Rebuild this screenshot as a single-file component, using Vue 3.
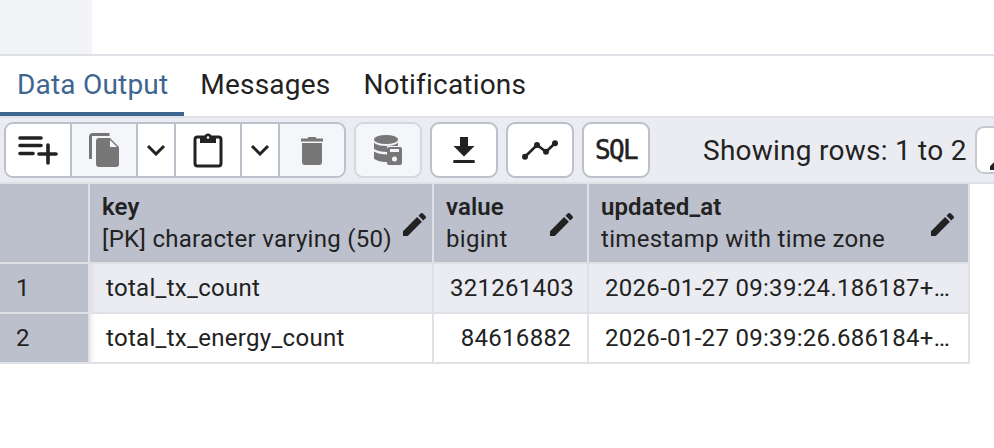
<script setup>
const tabs = [
  { label: 'Data Output', active: true },
  { label: 'Messages', active: false },
  { label: 'Notifications', active: false },
]
const rows = [
  { n: 1, key: 'total_tx_count', value: '321261403', at: '2026-01-27 09:39:24.186187+…', odd: true },
  { n: 2, key: 'total_tx_energy_count', value: '84616882', at: '2026-01-27 09:39:26.686184+…', odd: false },
]
const cols = [
  { name: 'key', type: '[PK] character varying (50)', tight: true },
  { name: 'value', type: 'bigint', tight: false },
  { name: 'updated_at', type: 'timestamp with time zone', tight: false },
]
</script>

<template>
  <div class="page">
    <div class="top"><div class="top-left"></div></div>
    <div class="tabs">
      <div v-for="t in tabs" :key="t.label" class="tab" :class="{ active: t.active }">{{ t.label }}</div>
    </div>
    <div class="toolbar">
      <div class="group">
        <div class="btn w66">
          <svg width="40" height="30" viewBox="0 0 40 30"><g fill="none" stroke="#222" stroke-width="3.600" stroke-linecap="round"><path d="M2 3H23M2 10.500H23M2 18.500H15M30 10V28M21 19H38"/></g></svg>
        </div>
        <div class="btn off w66">
          <svg width="30" height="34" viewBox="0 0 30 34"><path d="M1.500 26V3.500a2 2 0 0 1 2-2h17" fill="none" stroke="#777" stroke-width="3"/><path d="M10 5h11l9 9v17a3 3 0 0 1-3 3H10a3 3 0 0 1-3-3V8a3 3 0 0 1 3-3z" fill="#777"/><path d="M21 7v7h7z" fill="#f5f6f9"/></svg>
        </div>
        <div class="btn w38"><svg width="20" height="12" viewBox="0 0 20 12"><path d="M2 2l8 8 8-8" fill="none" stroke="#222" stroke-width="3"/></svg></div>
        <div class="btn w66">
          <svg width="30" height="36" viewBox="0 0 30 36"><rect x="2" y="5" width="26" height="29" rx="2.500" fill="none" stroke="#222" stroke-width="3"/><path d="M7 11V5h4.500a3.500 3.500 0 0 1 7 0H23v6z" fill="#222"/><circle cx="15" cy="5.500" r="1.300" fill="#fff"/></svg>
        </div>
        <div class="btn w38"><svg width="20" height="12" viewBox="0 0 20 12"><path d="M2 2l8 8 8-8" fill="none" stroke="#222" stroke-width="3"/></svg></div>
        <div class="btn off grow">
          <svg width="22" height="29" viewBox="0 0 22 29"><path d="M0 2.500h6.500L7.500 1h7l1 1.500H22V5.500H0z" fill="#777"/><path d="M1 7h20v19a3 3 0 0 1-3 3H4a3 3 0 0 1-3-3z" fill="#777"/></svg>
        </div>
      </div>
      <div class="solo off">
        <svg width="28" height="30" viewBox="0 0 28 30"><g fill="#777"><ellipse cx="12" cy="4.500" rx="12" ry="4.500"/><path d="M0 7.500c3 4.500 21 4.500 24 0V11H13v6C8 17 3 16 0 14zM0 16.500c3 2 8 3 13 3V27c-6 0-11-1.500-13-3.500z"/></g><rect x="13" y="12" width="15" height="18" rx="2" fill="#777"/><rect x="16" y="14" width="9" height="3" fill="#f5f6f9"/><circle cx="20.500" cy="24" r="2.500" fill="#f5f6f9"/></svg>
      </div>
      <div class="solo">
        <svg width="22" height="26" viewBox="0 0 22 26"><path d="M7 0h8v9h6.500L11 19.500.5 9H7z" fill="#222"/><rect x="0" y="23" width="22" height="3" rx="1.500" fill="#222"/></svg>
      </div>
      <div class="solo">
        <svg width="36" height="20" viewBox="0 0 36 20"><path d="M3 16.700L15 5l9 6.700L33 3.300" fill="none" stroke="#222" stroke-width="2.600"/><circle cx="3" cy="16.700" r="3" fill="#222"/><circle cx="15" cy="5" r="3" fill="#222"/><circle cx="24" cy="11.700" r="3" fill="#222"/><circle cx="33" cy="3.300" r="3" fill="#222"/></svg>
      </div>
      <div class="solo sql">SQL</div>
      <div class="status">Showing rows: 1 to 2</div>
      <div class="edge"><svg width="18" height="18" viewBox="3 3 18 18"><path d="M3 17.250V21h3.750L17.810 9.940l-3.750-3.750L3 17.250z" fill="#222"/></svg></div>
    </div>
    <div class="grid">
      <div class="corner"></div>
      <div v-for="c in cols" :key="c.name" class="head" :class="{ tight: c.tight }">
        <div class="head-text">
          <div class="name">{{ c.name }}</div>
          <div class="type">{{ c.type }}</div>
        </div>
        <svg class="pencil" width="23" height="23" viewBox="3 3 18 18"><path d="M3 17.250V21h3.750L17.810 9.940l-3.750-3.750L3 17.250zM20.710 7.040c.39-.39.39-1.020 0-1.410l-2.340-2.340a.996.996 0 0 0-1.410 0l-1.830 1.830 3.750 3.750 1.830-1.830z" fill="#222"/></svg>
      </div>
      <template v-for="r in rows" :key="r.n">
        <div class="rownum">{{ r.n }}</div>
        <div class="cell key" :class="{ odd: r.odd }">{{ r.key }}</div>
        <div class="cell num" :class="{ odd: r.odd, second: !r.odd }">{{ r.value }}</div>
        <div class="cell at" :class="{ odd: r.odd }">{{ r.at }}</div>
      </template>
    </div>
  </div>
</template>

<style>
html, body { margin: 0; background: #fff; }
</style>

<style scoped>
.page {
  width: 994px;
  height: 448px;
  overflow: hidden;
  background: #fff;
  font-family: Roboto, "Liberation Sans", sans-serif;
  color: #222;
}
.top { height: 54px; border-bottom: 2px solid #dfe1e7; }
.top-left { width: 92px; height: 54px; background: #f3f4f8; }
.tabs { display: flex; height: 60px; }
.tab {
  padding: 0 17px 0 16px;
  font-size: 28px;
  letter-spacing: 0.2px;
  line-height: 58px;
  height: 60px;
  box-sizing: border-box;
  white-space: nowrap;
}
.tab.active {
  padding: 0 16px 0 17px;
  color: #3e6590;
  border-bottom: 4px solid #3e6590;
}
.toolbar {
  display: flex;
  align-items: center;
  height: 68px;
  box-sizing: border-box;
  padding: 0 0 0 4px;
  background: #eaecf2;
  border-top: 2px solid #dfe1e7;
  border-bottom: 2px solid #dfe1e7;
  overflow: hidden;
}
.group {
  display: flex;
  width: 342px;
  height: 56px;
  box-sizing: border-box;
  border: 2px solid #bcc0cb;
  border-radius: 9px;
  overflow: hidden;
  flex: none;
}
.btn {
  display: flex;
  align-items: center;
  justify-content: center;
  box-sizing: border-box;
  background: #fff;
  border-right: 2px solid #bcc0cb;
  flex: none;
}
.btn.off { background: #f5f6f9; }
.w66 { width: 66px; }
.w38 { width: 38px; }
.grow { flex: 1; border-right: 0; }
.solo {
  display: flex;
  align-items: center;
  justify-content: center;
  box-sizing: border-box;
  height: 56px;
  width: 68px;
  margin-left: 8px;
  background: #fff;
  border: 2px solid #bcc0cb;
  border-radius: 9px;
  flex: none;
}
.solo.off { background: #f5f6f9; border-color: #d5d8e0; }
.sql {
  font-family: "DejaVu Sans Mono", monospace;
  font-size: 26px;
  letter-spacing: -1.700px;
  -webkit-text-stroke: 0.5px #222;
}
.status {
  flex: none;
  margin-left: 53px;
  font-size: 28px;
  letter-spacing: 0.25px;
  white-space: nowrap;
  color: #222;
}
.edge {
  flex: none;
  width: 40px;
  height: 48px;
  margin-left: 8px;
  box-sizing: border-box;
  border: 2px solid #c6c9d3;
  border-radius: 9px;
  background: #fff;
  padding: 24px 0 0 13px;
}
.grid {
  display: grid;
  grid-template-columns: 88px 342px 153px 379px;
  grid-template-rows: 78px 48px 48px;
  gap: 2px;
  width: 970px;
  box-sizing: border-box;
  background: #dfe1e7;
  border-bottom: 2px solid #dfe1e7;
  border-right: 2px solid #dfe1e7;
  font-size: 24px;
  letter-spacing: 0.3px;
}
.corner, .head, .rownum { background: #bcc0cc; }
.head {
  display: flex;
  align-items: center;
  justify-content: space-between;
  padding: 0 14px 0 12px;
}
.head.tight { padding-right: 6px; }
.name { font-weight: 600; line-height: 31px; letter-spacing: 0.1px; }
.type { line-height: 32px; white-space: nowrap; }
.head-text { padding-top: 1px; }
.pencil { flex: none; margin-top: 2px; }
.rownum { padding-left: 16px; line-height: 48px; }
.cell {
  background: #fff;
  line-height: 48px;
  padding-left: 16px;
  white-space: nowrap;
  overflow: hidden;
}
.cell.key { box-shadow: inset 7px 0 6px -6px rgba(0, 0, 0, 0.1); }
.cell.odd { background: #eaecf2; }
.num { text-align: right; padding: 0 13px 0 0; }
.num.second { padding-right: 16px; }
</style>
